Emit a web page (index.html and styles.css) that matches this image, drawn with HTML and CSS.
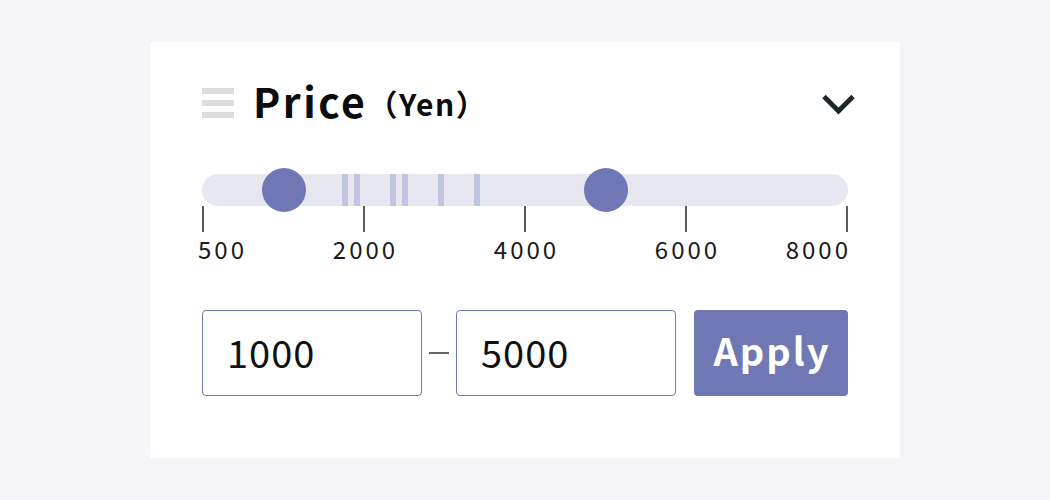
FILE: index.html
```html
<!DOCTYPE html>
<html lang="en">
<head>
<meta charset="utf-8">
<link rel="stylesheet" href="styles.css">
</head>
<body>
<section class="card">
  <header class="head">
    <div class="title">
      <span class="handle"><i></i><i></i><i></i></span>
      <h2 class="name">Price<span class="unit">（Yen）</span></h2>
    </div>
    <svg class="chev" viewBox="0 0 40 30" width="40" height="30" aria-hidden="true">
      <polyline points="8,8.5 22.5,23 37,8.5" fill="none" stroke="#1f262b" stroke-width="4.8" stroke-linejoin="miter"/>
    </svg>
  </header>

  <div class="slider">
    <div class="track">
      <span class="hist" style="left:140px"></span>
      <span class="hist" style="left:152px"></span>
      <span class="hist" style="left:188px"></span>
      <span class="hist" style="left:200px"></span>
      <span class="hist" style="left:236px"></span>
      <span class="hist" style="left:272px"></span>
      <span class="thumb" style="left:82px"></span>
      <span class="thumb" style="left:404px"></span>
    </div>
    <div class="scale">
      <div class="tick first"><span class="line"></span><span class="lbl">500</span></div>
      <div class="tick"><span class="line"></span><span class="lbl">2000</span></div>
      <div class="tick"><span class="line"></span><span class="lbl">4000</span></div>
      <div class="tick"><span class="line"></span><span class="lbl">6000</span></div>
      <div class="tick last"><span class="line"></span><span class="lbl">8000</span></div>
    </div>
  </div>

  <div class="range">
    <div class="field">1000</div>
    <span class="dash"></span>
    <div class="field">5000</div>
    <button class="apply">Apply</button>
  </div>
</section>
</body>
</html>
```

FILE: styles.css
```css
* { box-sizing: border-box; }
html, body { margin: 0; padding: 0; }
body {
  background: #f4f4f9;
  width: 1050px;
  height: 500px;
  font-family: "Noto Sans CJK JP", "Noto Sans", sans-serif;
  color: #111;
  padding-top: 42px;
}
.card {
  margin: 0 0 0 150px;
  width: 750px;
  height: 416px;
  background: #fff;
  padding: 30px 52px 0 52px;
  display: flex;
  flex-direction: column;
}
.head {
  height: 62px;
  display: flex;
  align-items: center;
  justify-content: space-between;
}
.title {
  display: flex;
  align-items: center;
  gap: 19px;
}
.handle {
  display: flex;
  flex-direction: column;
  gap: 6px;
  width: 32px;
}
.handle i {
  display: block;
  height: 6px;
  background: #dddddd;
}
.name {
  margin: 0;
  font-size: 41px;
  font-weight: 700;
  letter-spacing: 2.5px;
  line-height: 58px;
  padding-bottom: 4px;
  color: #0c0c0c;
}
.unit {
  font-size: 30px;
  letter-spacing: 1.5px;
  vertical-align: 2px;
}
.chev {
  display: block;
  margin-right: -8px;
}
.slider {
  margin-top: 40px;
}
.track {
  position: relative;
  height: 32px;
  border-radius: 16px;
  background: #e6e7f1;
}
.hist {
  position: absolute;
  top: 0;
  width: 6px;
  height: 32px;
  background: #c2c5e0;
}
.thumb {
  position: absolute;
  top: -6px;
  width: 44px;
  height: 44px;
  margin-left: -22px;
  border-radius: 50%;
  background: #6f77b4;
}
.scale {
  display: flex;
  justify-content: space-between;
}
.tick {
  width: 2px;
  display: flex;
  flex-direction: column;
  align-items: center;
}
.tick.first { align-items: flex-start; }
.tick.last { align-items: flex-end; }
.line {
  display: block;
  width: 2px;
  height: 26px;
  background: #5c5c5c;
}
.lbl {
  display: block;
  margin-top: 5px;
  font-size: 24px;
  line-height: 24px;
  letter-spacing: 3px;
  white-space: nowrap;
  color: #1a1a1a;
}
.tick .lbl { padding-left: 3px; }
.tick.first .lbl { padding-left: 0; margin-left: -4px; }
.tick.last .lbl { margin-right: -3px; padding-left: 0; }
.range {
  margin-top: 49px;
  display: flex;
  align-items: center;
}
.field {
  width: 220px;
  height: 86px;
  border: 1px solid #7077b5;
  border-radius: 4px;
  padding: 0 0 3px 24px;
  display: flex;
  align-items: center;
  font-size: 38px;
  letter-spacing: 1px;
  color: #111;
}
.dash {
  width: 20px;
  height: 2px;
  background: #666;
  margin: 0 7px;
}
.apply {
  margin-left: 18px;
  width: 154px;
  height: 86px;
  border: 0;
  border-radius: 4px;
  background: #6f77b4;
  color: #fff;
  font-family: "Noto Sans CJK JP", "Noto Sans", sans-serif;
  font-size: 38px;
  font-weight: 700;
  letter-spacing: 2px;
  padding: 0 0 8px 2px;
}
```
